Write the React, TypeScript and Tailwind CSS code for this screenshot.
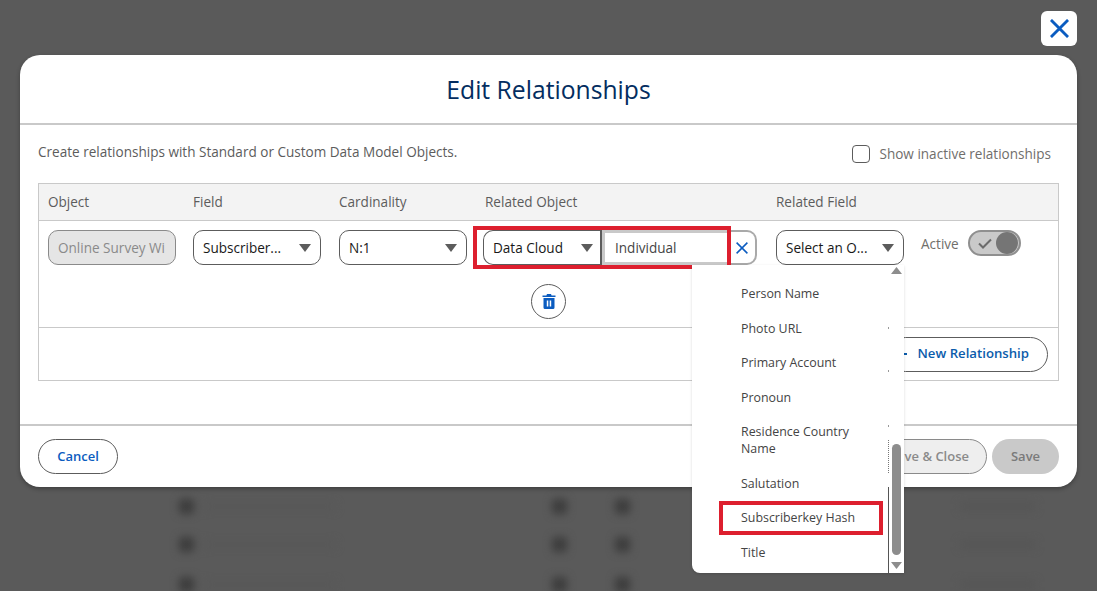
import { ReactNode } from "react";

const FIELD_OPTIONS = ["Person Name", "Photo URL", "Primary Account", "Pronoun", "Residence Country Name", "Salutation", "Subscriberkey Hash", "Title"];

const Caret = () => (
  <svg width="12" height="8" viewBox="0 0 12 8" className="shrink-0">
    <path d="M0 0h12L6 8z" fill="#5c5c5c" />
  </svg>
);

const CloseIcon = ({ size, stroke }: { size: number; stroke: number }) => (
  <svg width={size} height={size} viewBox="0 0 20 20">
    <path d="M1 1l18 18M19 1L1 19" stroke="#0b5cc0" strokeWidth={stroke} fill="none" />
  </svg>
);

const TrashIcon = () => (
  <svg width="14" height="15" viewBox="0 0 14 15">
    <path d="M5 0h4l.6 1.5H13.5V3H.5V1.500H4.400z" fill="#0b5cc0" />
    <path d="M1.500 4h11v9.500a1.500 1.500 0 0 1-1.500 1.500H3a1.500 1.500 0 0 1-1.500-1.500z" fill="#0b5cc0" />
    <path d="M4.800 6.500h1.500v6H4.800zM7.700 6.500h1.500v6H7.700z" fill="#fff" />
  </svg>
);

const Select = ({ label }: { label: string }) => (
  <div className="flex h-[35px] w-[128px] items-center justify-between rounded-[10px] border border-[#5c5c5c] bg-white pl-[9px] pr-[9px] text-[#181818]">
    <span className="translate-y-[1px]">{label}</span>
    <Caret />
  </div>
);

const ColumnHead = ({ children }: { children: ReactNode }) => <div className="text-[#5c5c5c]">{children}</div>;

// Blurred page that sits behind the modal
const BackdropRows = () => (
  <div className="absolute inset-0 blur-[4px]">
    {[507, 545, 585].map((top) => (
      <div key={top} className="absolute left-0 right-0 h-[15px]" style={{ top: top - 8 }}>
        <div className="absolute left-[179px] h-[15px] w-[15px] rounded-[4px] bg-[#3c3c3c]" />
        <div className="absolute left-[552px] h-[15px] w-[15px] rounded-[4px] bg-[#3c3c3c]" />
        <div className="absolute left-[615px] h-[15px] w-[15px] rounded-[4px] bg-[#3c3c3c]" />
        <div className="absolute left-[205px] top-[4px] h-[7px] w-[130px] bg-[#585858]" />
        <div className="absolute left-[960px] top-[4px] h-[7px] w-[75px] bg-[#555555]" />
      </div>
    ))}
  </div>
);

const FieldDropdown = () => (
  <div className="absolute left-[209px] top-[35px] z-20 flex h-[308px] w-[212px] rounded-bl-[8px] bg-white text-[12.4px] text-[#444444] shadow-[0_1px_3px_rgba(0,0,0,0.15)]">
    <div className="relative w-[197px] pl-[49px] pr-[24px] pt-[11.5px] leading-[17px]">
      {FIELD_OPTIONS.map((option) => (
        <div key={option} className="relative py-[8.75px]">
          {option}
          {option === "Subscriberkey Hash" && (
            <div className="absolute bottom-[0px] left-[-22px] top-[0px] w-[164px] border-[4px] border-[#dd1f2e]" />
          )}
        </div>
      ))}
      {/* clipped edge of the list underneath the scrollbar */}
      <div className="absolute bottom-0 right-0 h-[86px] w-px bg-[#555555]" />
      <div className="absolute bottom-[100px] right-0 h-[33px] border-r border-dotted border-[#777777]" />
      <div className="absolute right-0 top-[62px] h-[2px] w-px bg-[#999999]" />
      <div className="absolute right-0 top-[105px] h-[2px] w-px bg-[#999999]" />
      <div className="absolute right-0 top-[160px] h-[2px] w-px bg-[#999999]" />
    </div>
    <div className="flex w-[15px] flex-col items-center pb-[4px] pt-[2px]">
      <svg width="11" height="7" viewBox="0 0 11 7"><path d="M5.500 0L11 7H0z" fill="#8d8d8d" /></svg>
      <div className="mt-auto h-[111px] w-[9px] rounded-full bg-[#8d8d8d]" />
      <svg width="11" height="7" viewBox="0 0 11 7" className="mt-[7px]"><path d="M0 0h11L5.500 7z" fill="#8d8d8d" /></svg>
    </div>
  </div>
);

const RelatedObject = () => (
  <div className="relative flex h-[35px] w-[274px]">
    <div className="flex w-[119px] items-center justify-between rounded-l-[10px] border border-r-2 border-[#5c5c5c] bg-white pl-[9px] pr-[7px] text-[#181818]">
      <span className="translate-y-[1px]">Data Cloud</span>
      <Caret />
    </div>
    <div className="flex w-[129px] items-center border-[3px] border-[#c9c9c9] pl-[10px] text-[#444444]">
      <span className="translate-y-[1px]">Individual</span>
    </div>
    <div className="flex flex-1 items-center rounded-r-[10px] border-y-2 border-r-2 border-[#a9a9a9] pl-[5px]">
      <CloseIcon size={12} stroke={2.5} />
    </div>
    {/* red callout */}
    <div className="absolute -top-[4px] left-[-10px] h-[43px] w-[258px] border-[4px] border-[#dd1f2e]" />
    <FieldDropdown />
  </div>
);

export default function App() {
  return (
    <div className="relative h-[591px] w-[1097px] overflow-hidden bg-[#5a5a5a] font-['Open_Sans',sans-serif] text-[13.55px]">
      <BackdropRows />
      <div className="relative flex flex-col px-5 pt-[11px]">
        <div className="mb-[9px] flex justify-end">
          <button className="flex h-[35px] w-[36px] items-center justify-center rounded-[6px] bg-white">
            <CloseIcon size={19} stroke={3} />
          </button>
        </div>

        <div className="rounded-[20px] bg-white shadow-[0_2px_4px_rgba(0,0,0,0.3)]">
          <div className="flex h-[70px] items-center justify-center border-b-2 border-[#c9c9c9] pt-[2px] text-[24.7px] text-[#032d60]">
            Edit Relationships
          </div>

          <div className="h-[299px] px-[18px]">
            <div className="flex h-[58px] items-center justify-between pr-2">
              <div className="-mt-[3px] text-[#5c5c5c]">Create relationships with Standard or Custom Data Model Objects.</div>
              <label className="flex items-center gap-[9px] text-[#706e6b]">
                <span className="h-[18px] w-[18px] rounded-[4px] border border-[#5c5c5c] bg-white" />
                Show inactive relationships
              </label>
            </div>

            <div className="border border-[#c9c9c9]">
              <div className="grid h-[37px] grid-cols-[145px_146px_144px_293px_145px_1fr] items-center border-b border-[#c9c9c9] bg-[#f3f3f3] pl-[9px]">
                <ColumnHead>Object</ColumnHead>
                <ColumnHead>Field</ColumnHead>
                <ColumnHead>Cardinality</ColumnHead>
                <div className="pl-[2px]"><ColumnHead>Related Object</ColumnHead></div>
                <ColumnHead>Related Field</ColumnHead>
                <div />
              </div>

              <div className="h-[107px] border-b border-[#c9c9c9] pt-[9px]">
                <div className="grid grid-cols-[145px_146px_144px_293px_145px_1fr] items-start pl-[9px]">
                  <div className="flex h-[35px] w-[128px] items-center overflow-hidden whitespace-nowrap rounded-[10px] border border-[#8a8a8a] bg-[#e5e5e5] pl-[9px] text-[#8a8a8a]">
                    <span className="translate-y-[1px]">Online Survey Wi</span>
                  </div>
                  <Select label="Subscriber..." />
                  <Select label="N:1" />
                  <RelatedObject />
                  <Select label="Select an O..." />
                  <div className="flex h-[26px] items-center gap-[9px] text-[#706e6b]">
                    <span className="translate-y-[1px]">Active</span>
                    <div className="flex h-[26px] w-[53px] items-center justify-between rounded-full border-2 border-[#8f8f8f] bg-[#c9c9c9] pl-[8px] pr-[1px]">
                      <svg width="14" height="11" viewBox="0 0 14 11">
                        <path d="M1 5.500l4 4L13 1.500" stroke="#6b6b6b" strokeWidth="2" fill="none" />
                      </svg>
                      <div className="h-[22px] w-[22px] rounded-full bg-[#757575]" />
                    </div>
                  </div>
                </div>
                <div className="mt-[19px] flex justify-center">
                  <button className="flex h-[35px] w-[35px] items-center justify-center rounded-full border border-[#5c5c5c] bg-white">
                    <TrashIcon />
                  </button>
                </div>
              </div>

              <div className="flex h-[52px] items-center justify-end pr-[10px]">
                <button className="flex h-[35px] items-center gap-[11px] rounded-full border border-[#5c5c5c] bg-white pl-[8px] pr-[18px] text-[13.2px] font-semibold text-[#0b5cab]">
                  <svg width="10" height="10" viewBox="0 0 10 10">
                    <path d="M5 0v10M0 5h10" stroke="#0b5cab" strokeWidth="2" />
                  </svg>
                  New Relationship
                </button>
              </div>
            </div>
          </div>

          <div className="flex h-[63px] items-center justify-between border-t-2 border-[#c9c9c9] px-[18px] text-[13px]">
            <button className="h-[35px] w-[80px] rounded-full border border-[#5c5c5c] bg-white font-semibold text-[#0b5cc0]">Cancel</button>
            <div className="flex gap-[5px]">
              <button className="h-[35px] rounded-full border border-[#8a8a8a] bg-[#eeeeee] pl-[18px] pr-[17px] font-semibold text-[#8a8a8a]">Save &amp; Close</button>
              <button className="h-[35px] w-[67px] rounded-full bg-[#c9c9c9] font-semibold text-[#7a7a7a]">Save</button>
            </div>
          </div>
        </div>
      </div>
    </div>
  );
}
